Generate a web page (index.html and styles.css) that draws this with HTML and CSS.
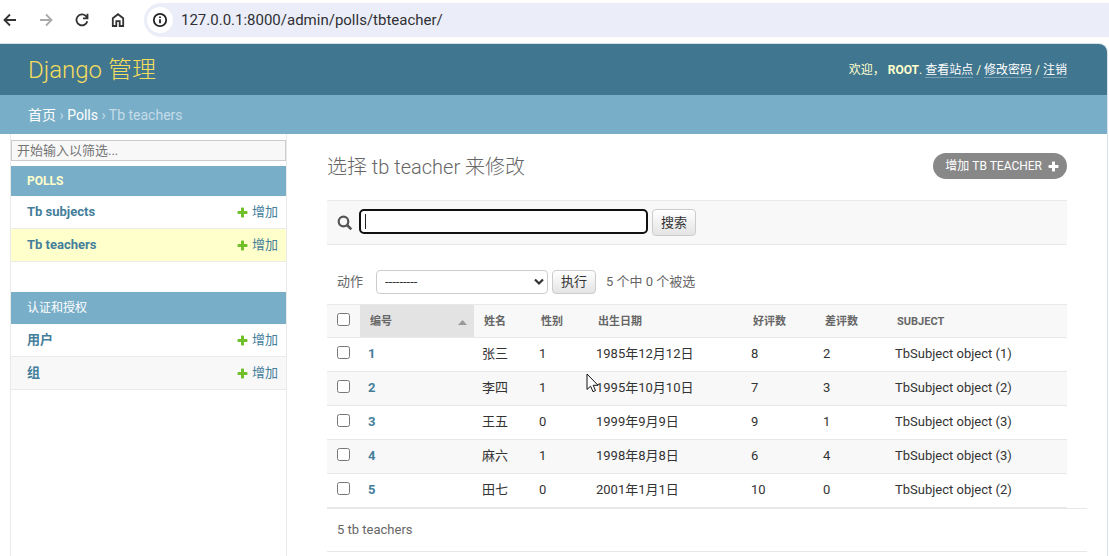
FILE: index.html
```html
<!DOCTYPE html>
<html lang="zh-CN">
<head>
<meta charset="utf-8">
<title>选择 tb teacher 来修改 | Django 站点管理员</title>
<link rel="stylesheet" href="styles.css">
</head>
<body>
<svg class="sprite" aria-hidden="true">
  <symbol id="plus" viewBox="0 0 11 11"><path d="M4 1.2Q4 .5 4.7 .5H6.3Q7 .5 7 1.2V4H9.8Q10.500 4 10.500 4.700V6.300Q10.500 7 9.800 7H7V9.800Q7 10.500 6.300 10.500H4.700Q4 10.500 4 9.800V7H1.200Q.5 7 .5 6.300V4.700Q.5 4 1.200 4H4Z" fill="currentColor"/></symbol>
</svg>
<div class="browser-bar">
  <button class="nav-btn" aria-label="后退"><svg width="16" height="16" viewBox="0 0 16 16"><path d="M14 8H3M8 2.500L2.500 8L8 13.500"/></svg></button>
  <button class="nav-btn muted" aria-label="前进"><svg width="16" height="16" viewBox="0 0 16 16"><path d="M2 8H13M8 2.500L13.500 8L8 13.500"/></svg></button>
  <button class="nav-btn" aria-label="刷新"><svg width="16" height="16" viewBox="0 0 16 16"><path d="M13.300 9.200A5.500 5.500 0 1 1 12 4.200L13.500 5.800M13.500 1.800V6.300H9"/></svg></button>
  <button class="nav-btn" aria-label="主页"><svg width="16" height="16" viewBox="0 0 16 16"><path d="M2.800 6.300L8 2.200L13.200 6.300V14H9.700V9.200H6.300V14H2.800Z"/></svg></button>
  <div class="address">
    <button class="site-info" aria-label="网站信息"><svg width="16" height="16" viewBox="0 0 16 16"><circle cx="8" cy="8" r="6.200"/><path d="M8 7.200V11.300M8 4.500V6"/></svg></button>
    <input class="url" type="text" aria-label="地址" value="127.0.0.1:8000/admin/polls/tbteacher/">
  </div>
</div>
<div class="page">
  <header class="header">
    <a class="brand" href="#">Django 管理</a>
    <div class="user-tools">欢迎， <strong>ROOT</strong>. <a href="#">查看站点</a> / <a href="#">修改密码</a> / <a href="#">注销</a></div>
  </header>
  <nav class="breadcrumbs" aria-label="面包屑"><a href="#">首页</a> › <a href="#">Polls</a> › Tb teachers</nav>
  <div class="body">
    <nav class="sidebar" aria-label="模型">
      <input class="filter" type="text" placeholder="开始输入以筛选..." aria-label="筛选">
      <section class="module">
        <h2><a href="#">POLLS</a></h2>
        <div class="model"><a class="name" href="#">Tb subjects</a><a class="add" href="#"><svg class="plus"><use href="#plus"/></svg>增加</a></div>
        <div class="model current"><a class="name" href="#">Tb teachers</a><a class="add" href="#"><svg class="plus"><use href="#plus"/></svg>增加</a></div>
      </section>
      <section class="module">
        <h2 class="cjk"><a href="#">认证和授权</a></h2>
        <div class="model"><a class="name" href="#">用户</a><a class="add" href="#"><svg class="plus"><use href="#plus"/></svg>增加</a></div>
        <div class="model alt"><a class="name" href="#">组</a><a class="add" href="#"><svg class="plus"><use href="#plus"/></svg>增加</a></div>
      </section>
    </nav>
    <main class="main">
      <div class="title-row">
        <h1>选择 tb teacher 来修改</h1>
        <a class="add-button" href="#">增加 TB TEACHER <svg class="plus"><use href="#plus"/></svg></a>
      </div>
      <form class="toolbar">
        <label for="searchbar" aria-label="搜索"><svg width="16" height="16" viewBox="0 0 16 16" fill="none" stroke="#555"><circle cx="6.500" cy="6.500" r="4.800" stroke-width="2.200"/><path d="M10 10L14.300 14.300" stroke-width="2.600"/></svg></label>
        <div class="search-box"><input id="searchbar" type="text"><span class="caret"></span></div>
        <button class="btn tall" type="button">搜索</button>
      </form>
      <div class="actions">
        <label for="action">动作</label>
        <div class="select-wrap">
          <select id="action"><option>---------</option></select>
          <svg class="chevron" width="10" height="8" viewBox="0 0 10 8"><path d="M1 1.500L5 5.500L9 1.500" fill="none" stroke="#333" stroke-width="2.200"/></svg>
        </div>
        <button class="btn" type="button">执行</button>
        <span class="counter">5 个中 0 个被选</span>
      </div>
      <table class="results">
        <colgroup><col class="c-check"><col class="c-id"><col class="c-short"><col class="c-short"><col class="c-date"><col class="c-vote"><col class="c-vote"><col></colgroup>
        <thead><tr><th class="check"><input type="checkbox" aria-label="全选"></th><th class="sorted"><div class="sort">编号<svg width="9" height="5" viewBox="0 0 9 5"><path d="M0 5L4.500 0L9 5Z" fill="#999"/></svg></div></th><th>姓名</th><th>性别</th><th>出生日期</th><th>好评数</th><th>差评数</th><th>SUBJECT</th></tr></thead>
        <tbody>
          <tr><td class="check"><input type="checkbox" aria-label="选择 1"></td><td><a href="#">1</a></td><td>张三</td><td>1</td><td>1985年12月12日</td><td>8</td><td>2</td><td>TbSubject object (1)</td></tr>
          <tr><td class="check"><input type="checkbox" aria-label="选择 2"></td><td><a href="#">2</a></td><td>李四</td><td>1</td><td>1995年10月10日</td><td>7</td><td>3</td><td>TbSubject object (2)</td></tr>
          <tr><td class="check"><input type="checkbox" aria-label="选择 3"></td><td><a href="#">3</a></td><td>王五</td><td>0</td><td>1999年9月9日</td><td>9</td><td>1</td><td>TbSubject object (3)</td></tr>
          <tr><td class="check"><input type="checkbox" aria-label="选择 4"></td><td><a href="#">4</a></td><td>麻六</td><td>1</td><td>1998年8月8日</td><td>6</td><td>4</td><td>TbSubject object (3)</td></tr>
          <tr><td class="check"><input type="checkbox" aria-label="选择 5"></td><td><a href="#">5</a></td><td>田七</td><td>0</td><td>2001年1月1日</td><td>10</td><td>0</td><td>TbSubject object (2)</td></tr>
        </tbody>
      </table>
      <p class="paginator">5 tb teachers</p>
    </main>
  </div>
</div>
<svg class="pointer" width="13" height="20" viewBox="0 0 13 20"><path d="M1 1V16.500L4.600 13.200L7 18.700L9.500 17.600L7.200 12.300H12Z" fill="#fff" stroke="#111"/></svg>
</body>
</html>
```
FILE: styles.css
```css
* { box-sizing: border-box; }

body {
  margin: 0;
  min-height: 100vh;
  display: flex;
  flex-direction: column;
  background: #fff;
  color: #333;
  font: 13px/20px Roboto, "Noto Sans CJK SC", sans-serif;
  overflow: hidden;
}

a { color: #447e9b; text-decoration: none; }
button, input, select { font: inherit; color: inherit; }
.sprite { position: absolute; width: 0; height: 0; }

/* Browser chrome */
.browser-bar {
  display: flex;
  align-items: center;
  gap: 20px;
  padding: 3px 0 6px 2px;
}
.nav-btn {
  display: flex;
  padding: 0;
  border: 0;
  background: none;
  color: #333;
}
.nav-btn.muted { color: #aaa; }
.nav-btn svg, .site-info svg { fill: none; stroke: currentColor; stroke-width: 1.8; }
.nav-btn + .address { margin-left: -2px; }
.address {
  flex: 1;
  display: flex;
  align-items: center;
  gap: 8px;
  height: 34px;
  padding-left: 3px;
  border-radius: 17px 0 0 17px;
  background: #ebeef8;
}
.site-info {
  display: flex;
  align-items: center;
  justify-content: center;
  width: 26px;
  height: 26px;
  padding: 0;
  border: 0;
  border-radius: 50%;
  background: #fff;
  color: #222;
}
.url {
  flex: 1;
  padding: 0;
  border: 0;
  outline: 0;
  background: none;
  color: #303034;
  font: 15px/20px Roboto, sans-serif;
}

/* Page frame */
.page {
  flex: 1;
  display: flex;
  flex-direction: column;
  margin-right: 1px;
  border: solid #dce3e8;
  border-width: 1px 1px 0 0;
  border-radius: 0 9px 0 0;
  overflow: hidden;
}
.header {
  display: flex;
  align-items: center;
  justify-content: space-between;
  height: 51px;
  padding: 0 40px 0 28px;
  background: #417690;
  color: #ffc;
}
.brand { color: #f5dd5d; font-size: 24px; font-weight: 300; line-height: 32px; }
.user-tools { font-size: 12px; }
.user-tools a { color: #fff; border-bottom: 1px solid rgba(255, 255, 255, .3); }
.breadcrumbs {
  height: 39px;
  padding: 10px 28px;
  background: #79aec8;
  color: #c4dce8;
  font-size: 14px;
}
.breadcrumbs a { color: #fff; }
.body { flex: 1; display: flex; }

/* Sidebar */
.sidebar {
  width: 277px;
  margin-left: 10px;
  padding-top: 6px;
  border: solid #eaeaea;
  border-width: 0 1px;
}
.filter {
  display: block;
  width: 100%;
  height: 21px;
  margin-bottom: 5px;
  padding: 0 5px;
  border: 1px solid #ccc;
  background: #f8f8f8;
}
.filter::placeholder { color: #757575; }
.module { margin-bottom: 30px; }
.module h2 {
  margin: 0;
  padding: 5px 16px;
  background: #79aec8;
  font-size: 12px;
  font-weight: 700;
}
.module h2 a { color: #ffc; }
.module h2.cjk { padding: 6px 16px; font-weight: 400; }
.module h2.cjk a { color: #fff; }
.model {
  display: flex;
  justify-content: space-between;
  padding: 6px 8px 6px 16px;
  border-bottom: 1px solid #eaeaea;
}
.model.current { background: #ffc; }
.model.alt { background: #f8f8f8; }
.name { font-weight: 700; }
.add { display: flex; align-items: center; gap: 4px; }
.plus { width: 11px; height: 11px; }
.add .plus { color: #70bf2b; }

/* Change list */
.main { flex: 1; padding: 18px 40px 0; }
.title-row {
  display: flex;
  justify-content: space-between;
  align-items: flex-start;
  height: 48px;
}
h1 { margin: 0; color: #666; font-size: 20px; font-weight: 300; line-height: 30px; }
.add-button {
  display: flex;
  align-items: center;
  gap: 6px;
  height: 26px;
  margin-top: 1px;
  padding: 0 8px 0 12px;
  border-radius: 13px;
  background: #888;
  color: #fff;
  font-size: 12px;
}
.toolbar {
  display: flex;
  align-items: flex-start;
  height: 45px;
  padding: 8px 10px;
  border: solid #eaeaea;
  border-width: 1px 0;
  background: #f8f8f8;
}
.toolbar label { display: flex; margin-right: 6px; padding-top: 6px; }
.search-box { position: relative; width: 289px; margin-right: 4px; }
#searchbar {
  display: block;
  width: 100%;
  height: 25px;
  padding: 0 4px;
  border: 2px solid #101010;
  border-radius: 5px;
  outline: 0;
  background: #fff;
}
.caret {
  position: absolute;
  left: 6px;
  top: 5px;
  width: 1px;
  height: 15px;
  background: #222;
}
.btn {
  height: 24px;
  padding: 0 8px;
  border: 1px solid #ccc;
  border-radius: 4px;
  background: linear-gradient(#fff, #e4e4e4);
  color: #333;
  line-height: 20px;
}
.btn.tall { height: 27px; }
.actions {
  display: flex;
  align-items: center;
  padding: 25px 10px 10px;
  color: #666;
}
.select-wrap { position: relative; margin: 0 4px 0 13px; }
#action {
  display: block;
  width: 172px;
  height: 24px;
  padding: 0 8px;
  border: 1px solid #ccc;
  border-radius: 4px;
  background: #fff;
  color: #333;
  appearance: none;
}
.chevron { position: absolute; right: 4px; top: 8px; pointer-events: none; }
.counter { margin-left: 10px; }

.results { width: 100%; border-collapse: separate; border-spacing: 0; table-layout: fixed; }
.c-check { width: 33px; }
.c-id { width: 114px; }
.c-short { width: 57px; }
.c-date { width: 155px; }
.c-vote { width: 72px; }
.results th, .results td {
  height: 34px;
  padding: 0 8px 2px;
  border-bottom: 1px solid #e8e8e8;
  text-align: left;
  white-space: nowrap;
}
.results th {
  padding: 2px 10px 0;
  border-top: 1px solid #e8e8e8;
  background: #f8f8f8;
  color: #666;
  font-size: 11px;
  font-weight: 700;
}
.results th.sorted { background: #e3e3e3; }
.sort { display: flex; align-items: center; justify-content: space-between; margin-right: -3px; }
.results tbody tr:nth-child(even) { background: #f8f8f8; }
.results td a { font-weight: 700; }
.results .check { padding: 0 10px 2px; }
.results input { display: block; width: 13px; height: 13px; margin: 0 0 2px; }
.paginator {
  margin: 0 -20px 0 0;
  padding: 11px 10px;
  border: solid #e8e8e8;
  border-width: 1px 0;
  color: #666;
}

.pointer { position: absolute; left: 586px; top: 373px; pointer-events: none; }
```
